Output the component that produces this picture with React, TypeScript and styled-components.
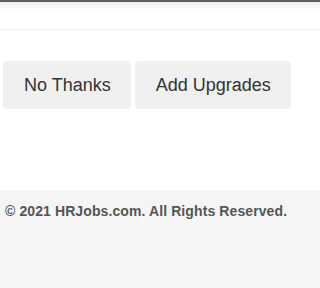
import React from 'react';
import styled, { createGlobalStyle } from 'styled-components';

const GlobalStyle = createGlobalStyle`
  html, body {
    margin: 0;
    padding: 0;
    background: #ffffff;
    font-family: "Liberation Sans", Arial, sans-serif;
    overflow: hidden;
  }
`;

const Page = styled.div`
  width: 100%;
  height: 100vh;
  overflow: hidden;
  display: flex;
  flex-direction: column;
`;

const HeaderEdge = styled.div`
  height: 2px;
  background: #5e5e5e;
  flex-shrink: 0;
`;

const Summary = styled.div`
  height: 27px;
  flex-shrink: 0;
  border-bottom: 1px solid #efefef;
  background: linear-gradient(to bottom, #ececec 0px, #f6f6f6 4px, #ffffff 10px);
`;

const Actions = styled.div`
  display: flex;
  gap: 4px;
  padding: 31px 0 0 3px;
  white-space: nowrap;
`;

const ActionButton = styled.button`
  flex-shrink: 0;
  height: 48px;
  padding: 0 20px 0 21px;
  border: none;
  border-radius: 4px;
  background: #f0f0f0;
  color: #333333;
  font-family: "Liberation Sans", Arial, sans-serif;
  font-size: 18px;
  cursor: pointer;
`;

const Footer = styled.footer`
  margin-top: 81px;
  flex: 1;
  background: #f5f5f5;
  padding: 13px 0 0 5px;
`;

const Copyright = styled.p`
  margin: 0;
  font-size: 14px;
  line-height: 16px;
  font-weight: bold;
  letter-spacing: 0.1px;
  color: #555555;
  white-space: nowrap;
`;

const App = () => {
  return (
    <Page>
      <GlobalStyle />
      <HeaderEdge />
      <Summary />
      <Actions>
        <ActionButton type="button">No Thanks</ActionButton>
        <ActionButton type="button">Add Upgrades</ActionButton>
      </Actions>
      <Footer>
        <Copyright>© 2021 HRJobs.com. All Rights Reserved.</Copyright>
      </Footer>
    </Page>
  );
};

export default App;
